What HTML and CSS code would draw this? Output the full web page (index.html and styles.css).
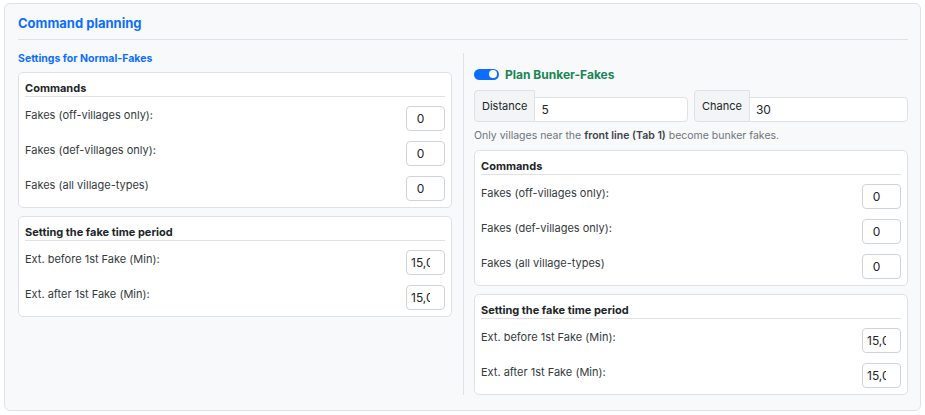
FILE: index.html
```html
<!DOCTYPE html>
<html lang="en">
<head>
<meta charset="utf-8">
<title>Command planning</title>
<link rel="stylesheet" href="styles.css">
</head>
<body>
<div class="panel">
  <div class="panel-title">Command planning</div>
  <div class="columns">
    <div class="col col-left">
      <div class="sub-title">Settings for Normal-Fakes</div>
      <div class="card">
        <div class="card-title">Commands</div>
        <div class="rows">
          <div class="row"><span class="lbl">Fakes (off-villages only):</span><input class="num" type="text" value="0"></div>
          <div class="row"><span class="lbl">Fakes (def-villages only):</span><input class="num" type="text" value="0"></div>
          <div class="row"><span class="lbl">Fakes (all village-types)</span><input class="num" type="text" value="0"></div>
        </div>
      </div>
      <div class="card">
        <div class="card-title">Setting the fake time period</div>
        <div class="rows">
          <div class="row"><span class="lbl">Ext. before 1st Fake (Min):</span><input class="num" type="text" value="15,00"></div>
          <div class="row"><span class="lbl">Ext. after 1st Fake (Min):</span><input class="num" type="text" value="15,00"></div>
        </div>
      </div>
    </div>
    <div class="col col-right">
      <div class="toggle-row">
        <span class="switch"><span class="knob"></span></span>
        <span class="toggle-label">Plan Bunker-Fakes</span>
      </div>
      <div class="groups">
        <div class="igroup"><span class="ilabel">Distance</span><input class="itext" type="text" value="5"></div>
        <div class="igroup"><span class="ilabel">Chance</span><input class="itext" type="text" value="30"></div>
      </div>
      <div class="help">Only villages near the <b>front line (Tab 1)</b> become bunker fakes.</div>
      <div class="card">
        <div class="card-title">Commands</div>
        <div class="rows">
          <div class="row"><span class="lbl">Fakes (off-villages only):</span><input class="num" type="text" value="0"></div>
          <div class="row"><span class="lbl">Fakes (def-villages only):</span><input class="num" type="text" value="0"></div>
          <div class="row"><span class="lbl">Fakes (all village-types)</span><input class="num" type="text" value="0"></div>
        </div>
      </div>
      <div class="card">
        <div class="card-title">Setting the fake time period</div>
        <div class="rows">
          <div class="row"><span class="lbl">Ext. before 1st Fake (Min):</span><input class="num" type="text" value="15,00"></div>
          <div class="row"><span class="lbl">Ext. after 1st Fake (Min):</span><input class="num" type="text" value="15,00"></div>
        </div>
      </div>
    </div>
  </div>
</div>
</body>
</html>
```

FILE: styles.css
```css
* { box-sizing: border-box; }
html, body { margin: 0; padding: 0; background: #ffffff; }
body {
  font-family: Inter, "Liberation Sans", sans-serif;
  color: #212529;
}
.panel {
  margin: 3px 4px 0 4px;
  height: 408px;
  background: #f8f9fa;
  border: 1px solid #dee2e6;
  border-radius: 6px;
  padding: 0 12px 0 13px;
}
.panel-title {
  padding: 10px 0 7px;
  line-height: 18px;
  font-size: 13px;
  font-weight: 700;
  color: #0d6efd;
  border-bottom: 1px solid #dee2e6;
}
.columns {
  display: grid;
  grid-template-columns: 445px 445px;
  margin-top: 13px;
}
.col-left { padding-right: 11px; }
.col-right {
  border-left: 1px solid #dee2e6;
  padding-left: 10px;
}
.sub-title {
  font-size: 10.5px;
  line-height: 11px;
  font-weight: 700;
  color: #0d6efd;
  margin-bottom: 8px;
}
.card {
  background: #fff;
  border: 1px solid #dee2e6;
  border-radius: 5px;
  padding: 0 6px 6px;
}
.card + .card { margin-top: 8px; }
.card-title {
  padding-top: 7px;
  line-height: 16px;
  font-size: 11px;
  font-weight: 700;
  color: #212529;
  border-bottom: 1px solid #dee2e6;
}
.rows {
  display: flex;
  flex-direction: column;
  gap: 10px;
  margin-top: 9px;
}
.row {
  display: flex;
  justify-content: space-between;
  align-items: flex-start;
}
.lbl {
  font-size: 11px;
  line-height: 18px;
  color: #333a40;
}
.num {
  width: 39px;
  height: 25px;
  border: 1px solid #ced4da;
  border-radius: 4px;
  padding: 0 14px 0 4px;
  font-family: Inter, "Liberation Sans", sans-serif;
  font-size: 12px;
  color: #212529;
  text-align: center;
  background: #fff;
  outline: none;
}
.toggle-row {
  display: flex;
  align-items: center;
  height: 16px;
  margin-top: 13px;
}
.switch {
  width: 25px;
  height: 11px;
  border-radius: 6px;
  background: #0d6efd;
  display: flex;
  justify-content: flex-end;
  align-items: center;
  padding-right: 2px;
  margin-right: 6px;
}
.knob {
  width: 8px;
  height: 8px;
  border-radius: 50%;
  background: #fff;
}
.toggle-label {
  font-size: 12px;
  font-weight: 700;
  color: #198754;
}
.groups {
  display: flex;
  gap: 6px;
  margin-top: 8px;
}
.igroup {
  flex: 1 1 0;
  min-width: 0;
  display: flex;
  align-items: flex-end;
}
.ilabel {
  flex: none;
  height: 32px;
  display: flex;
  align-items: center;
  padding: 0 7px;
  font-size: 11px;
  color: #212529;
  background: #f3f4f6;
  border: 1px solid #dee2e6;
  border-radius: 4px 0 0 4px;
}
.itext {
  flex: 1 1 0;
  width: 0;
  min-width: 0;
  height: 25px;
  margin-left: -1px;
  border: 1px solid #dee2e6;
  border-radius: 0 4px 4px 0;
  padding: 0 6px;
  font-family: Inter, "Liberation Sans", sans-serif;
  font-size: 12px;
  color: #212529;
  background: #fff;
  outline: none;
}
.help {
  margin-top: 6px;
  margin-bottom: 6px;
  line-height: 16px;
  font-size: 10.5px;
  color: #6c757d;
}
.help b { color: #3d434a; font-weight: 600; }
```
